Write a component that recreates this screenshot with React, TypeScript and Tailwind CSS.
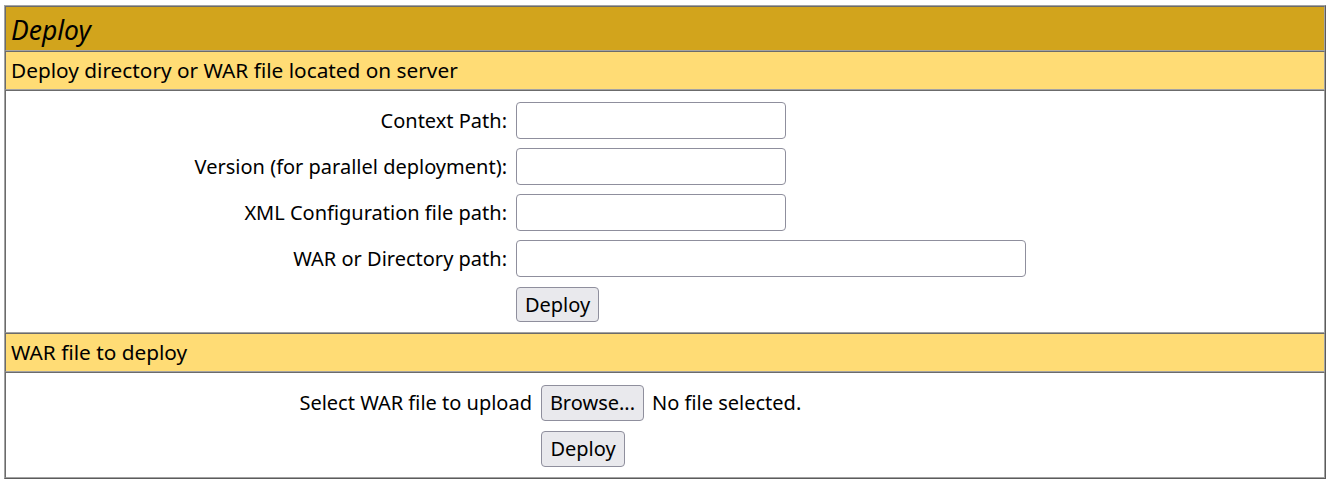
import React from 'react';

// light / dark edges of the old-style table borders
const cellBorder =
  'border border-t-[#6b6b6b] border-l-[#6b6b6b] border-b-[#a3a3a3] border-r-[#a3a3a3]';

const inputCls =
  'h-[37px] bg-white border border-[#8f8f9d] rounded-[4px] px-2 outline-none';

const buttonCls =
  'h-[35px] bg-[#e9e9ed] border border-[#8f8f9d] rounded-[4px] text-[20px] text-[#000] flex items-center justify-center';

function Row({ label, width }: { label: string; width: string }) {
  return (
    <>
      <div className="text-right leading-[37px]">{label}</div>
      <div>
        <input type="text" className={`${inputCls} ${width}`} />
      </div>
    </>
  );
}

export default function App() {
  return (
    <div
      className="min-h-screen bg-white pt-[5px] pl-[4px] text-[20px] text-black"
      style={{ fontFamily: '"Noto Sans", "Open Sans", sans-serif' }}
    >
      <div className="w-[1322px] border border-t-[#a3a3a3] border-l-[#a3a3a3] border-b-[#5c5c5c] border-r-[#5c5c5c]">
        {/* title */}
        <div className={`${cellBorder} h-[45px] bg-[#D2A41C] flex items-center pl-[5px]`}>
          <span className="italic text-[26.5px] leading-none pt-[3px]">Deploy</span>
        </div>

        {/* server-side deploy */}
        <div className={`${cellBorder} h-[39px] bg-[#FFDC75] flex items-center pl-[5px] text-[20.8px]`}>
          Deploy directory or WAR file located on server
        </div>
        <div className={`${cellBorder} h-[243px] bg-white pt-[11px]`}>
          <div className="grid grid-cols-[501px_auto] gap-x-[9px] gap-y-[9px] items-center">
            <Row label="Context Path:" width="w-[270px]" />
            <Row label="Version (for parallel deployment):" width="w-[270px]" />
            <Row label="XML Configuration file path:" width="w-[270px]" />
            <Row label="WAR or Directory path:" width="w-[510px]" />
            <div />
            <div className="mt-px">
              <button className={`${buttonCls} w-[83px]`}>Deploy</button>
            </div>
          </div>
        </div>

        {/* upload */}
        <div className={`${cellBorder} h-[39px] bg-[#FFDC75] flex items-center pl-[5px] text-[20.8px]`}>
          WAR file to deploy
        </div>
        <div className={`${cellBorder} h-[106px] bg-white pt-[12px]`}>
          <div className="grid grid-cols-[526px_auto] gap-x-[9px] gap-y-[10px] items-center">
            <div className="text-right">Select WAR file to upload</div>
            <div className="flex items-center gap-[8px]">
              <button className={`${buttonCls} w-[103px] h-[36px]`}>Browse...</button>
              <span>No file selected.</span>
            </div>
            <div />
            <div>
              <button className={`${buttonCls} w-[84px] h-[36px]`}>Deploy</button>
            </div>
          </div>
        </div>
      </div>
    </div>
  );
}
